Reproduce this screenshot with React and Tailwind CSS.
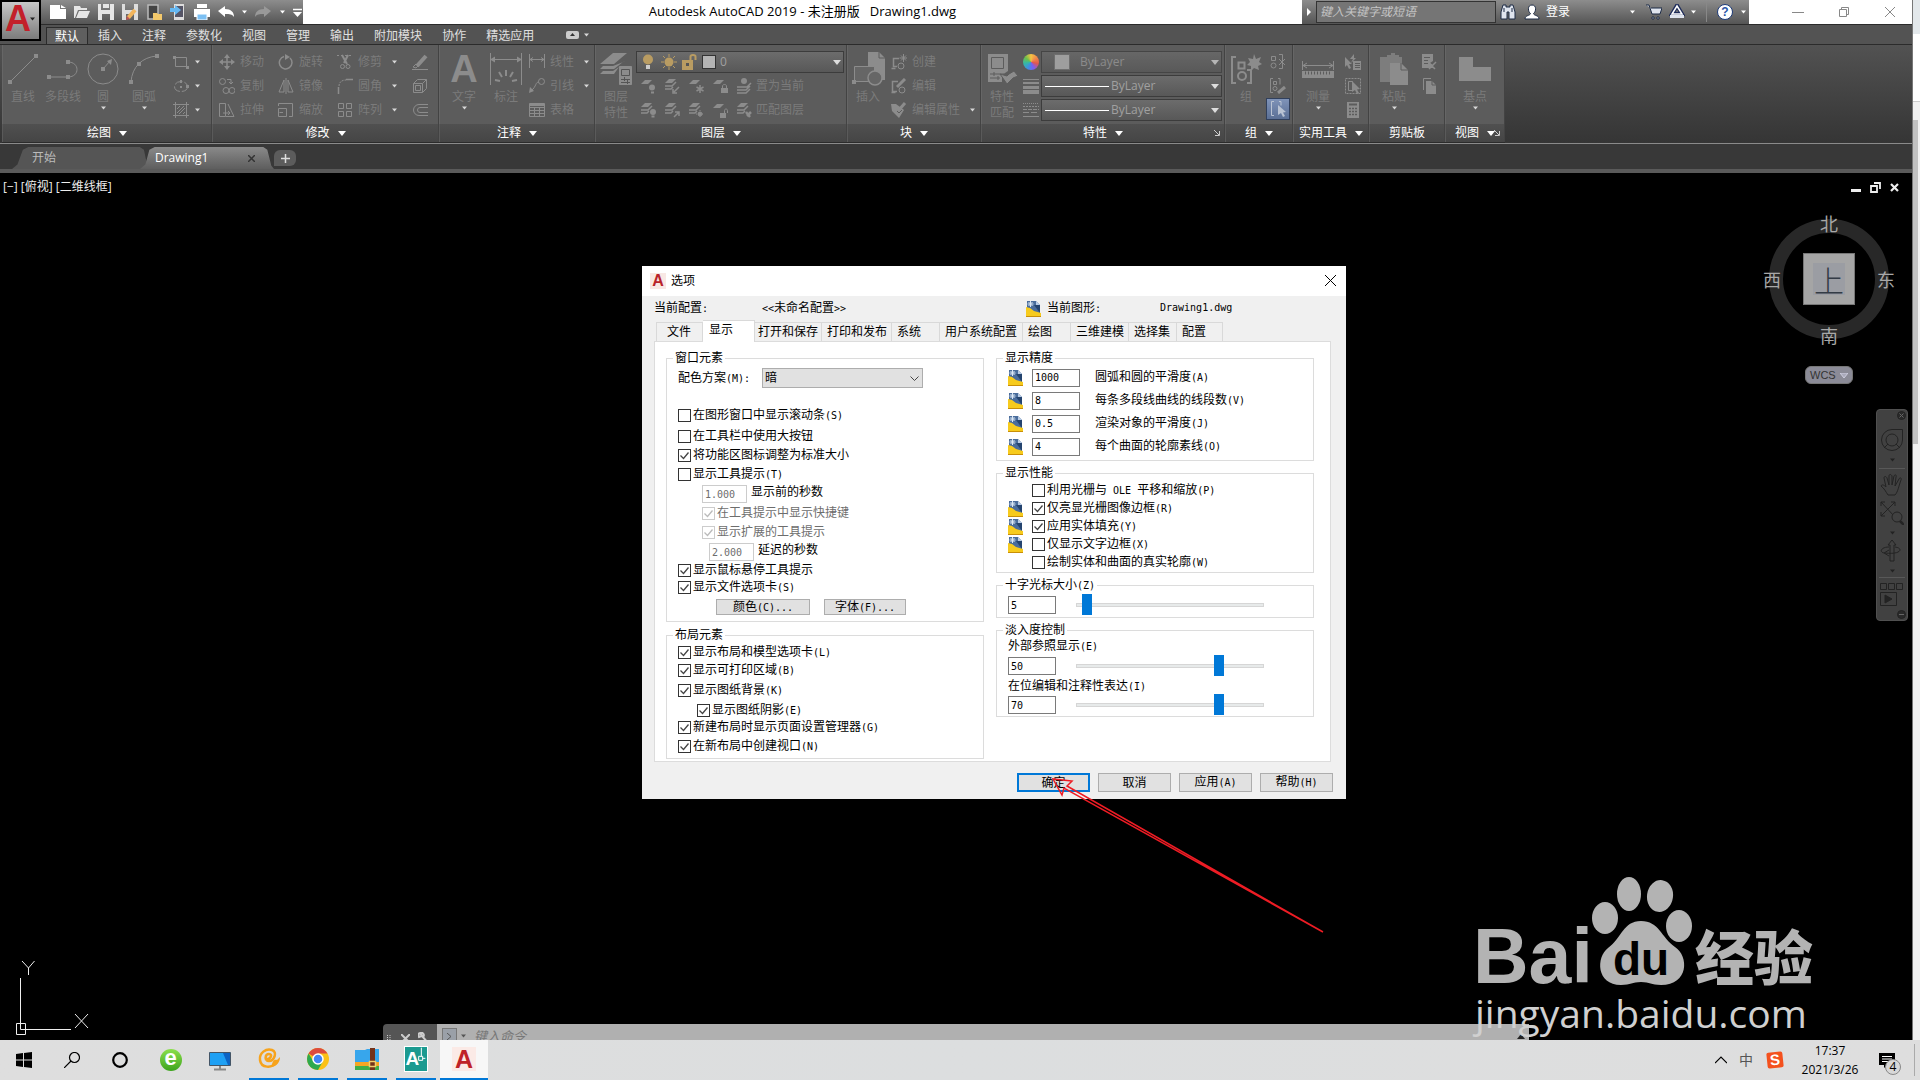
import { useState } from "react";

/* ---------- helpers ---------- */

const Svg = ({ size = 16, box = 16, className = "", children }) => (
  <svg
    width={size}
    height={size}
    viewBox={`0 0 ${box} ${box}`}
    fill="none"
    stroke="currentColor"
    strokeWidth="1"
    className={`shrink-0 ${className}`}
    aria-hidden="true"
  >
    {children}
  </svg>
);

const Caret = ({ className = "text-[#d8d8d8]" }) => (
  <svg width="5" height="4" viewBox="0 0 5 4" className={`shrink-0 ${className}`} aria-hidden="true">
    <path d="M0 .5h5L2.5 3.5z" fill="currentColor" />
  </svg>
);

// Latin runs are half as wide as a Chinese character in the dialog font
const Mixed = ({ children }) =>
  children.split(/([\x20-\x7e]+)/).map((part, i) =>
    /[\x20-\x7e]/.test(part) ? (
      <span key={i} className="whitespace-pre font-['DejaVu_Sans_Mono',monospace] text-[10px]">{part}</span>
    ) : (
      part
    )
  );

/* ---------- ribbon drawings ---------- */

const Sheet = ({ y = 2 }) => <path d={`M5 ${y}h7l-4 4H1z`} fill="currentColor" stroke="none" />;
const Sheets = () => (
  <>
    <Sheet y={1} />
    <path d="M1 8h7l4-4M1 11h6l2-2" strokeWidth="1.5" />
  </>
);

const art = {
  line: (
    <Svg size={32} box={32}>
      <path d="M3 29L29 3" />
      <path d="M1 27h4v4H1zM27 1h4v4h-4z" fill="currentColor" stroke="none" />
    </Svg>
  ),
  polyline: (
    <Svg size={32} box={32}>
      <path d="M2 24h19M21 9c12 0 12 15 0 15" />
      <path d="M0 22h4v4H0zM19 22h4v4h-4zM19 7h4v4h-4z" fill="currentColor" stroke="none" />
    </Svg>
  ),
  circle: (
    <Svg size={32} box={32}>
      <circle cx="16" cy="16" r="15" />
      <path d="M16 16l7-8" />
      <path d="M14 14h4v4h-4zM25 6l-1 6-4-4z" fill="currentColor" stroke="none" />
    </Svg>
  ),
  arc: (
    <Svg size={32} box={32}>
      <path d="M3 29C4 14 14 4 29 3" />
      <path d="M1 27h4v4H1zM9 9h4v4H9zM27 1h4v4h-4z" fill="currentColor" stroke="none" />
    </Svg>
  ),
  rect: (
    <Svg>
      <path d="M2.500 3.500h11v9h-11z" />
      <path d="M0 2h3v3H0zM13 12h3v3h-3z" fill="currentColor" stroke="none" />
    </Svg>
  ),
  ellipse: (
    <Svg>
      <ellipse cx="8" cy="8.500" rx="6.500" ry="5" strokeDasharray="8 2" />
      <path d="M7 8h2v2H7zM7 2h2v3H7zM13 7h3v3h-3z" fill="currentColor" stroke="none" />
    </Svg>
  ),
  hatch: (
    <Svg>
      <path d="M2.500 0v16M13.500 0v16M0 2.500h16M0 13.500h16M4 7l3-3M4 11l7-7M6 12l6-6M10 12l2-2" />
    </Svg>
  ),
  move: (
    <Svg>
      <path d="M8 2v12M2 8h12" strokeWidth="1.500" />
      <path d="M8 0l3 4H5zM8 16l3-4H5zM0 8l4-3v6zM16 8l-4-3v6z" fill="currentColor" stroke="none" />
    </Svg>
  ),
  rotate: (
    <Svg>
      <path d="M6 2.500A6.300 6.300 0 1 0 12 4" strokeWidth="1.500" />
      <path d="M7 0l5 3-5 3z" fill="currentColor" stroke="none" />
    </Svg>
  ),
  trim: (
    <Svg>
      <path d="M0 1.500h16" strokeDasharray="2 2" />
      <path d="M5 1l5 9M11 1L7 9" strokeWidth="2" />
      <circle cx="5.500" cy="12.500" r="2" />
      <circle cx="11" cy="12.500" r="2" />
    </Svg>
  ),
  erase: (
    <Svg>
      <path d="M5 12L14 2" strokeWidth="4" />
      <path d="M0 15.500h16M1 13l3-3 2 2-2 2z" />
    </Svg>
  ),
  copy: (
    <Svg>
      <circle cx="3.500" cy="3.500" r="3" />
      <circle cx="7" cy="12.500" r="3" />
      <circle cx="13" cy="12.500" r="3" />
      <path d="M8 1.500h4v4M10 4l2 2 2-2" />
    </Svg>
  ),
  mirror: (
    <Svg>
      <path d="M6 2v12H1zM10 2v12h5z" />
      <path d="M8 0v16" />
    </Svg>
  ),
  fillet: (
    <Svg>
      <path d="M1.500 16V9" strokeWidth="1.500" />
      <path d="M2 8c0-4 3-6 7-6" strokeDasharray="2 1" />
      <path d="M9 1.500h7" strokeWidth="1.500" />
    </Svg>
  ),
  explode: (
    <Svg>
      <path d="M1.500 5.500h9v9h-9zM3.500 7.500h5v5h-5zM1.500 5.500l4-4h9l-4 4M14.500 1.500v9l-4 4" />
    </Svg>
  ),
  stretch: (
    <Svg>
      <path d="M.5 1.500h6v13h-6zM9 2l6 12.500H7M4 11h7M9 9l2 2-2 2" />
    </Svg>
  ),
  scale: (
    <Svg>
      <path d="M.5 6.500h8v8h-8zM.5 4V1.500h14v13H11M5 10.500H1.500" />
    </Svg>
  ),
  array: (
    <Svg>
      <path d="M1.500 1.500h5v5h-5zM9.500 1.500h5v5h-5zM1.500 9.500h5v5h-5zM9.500 9.500h5v5h-5z" />
    </Svg>
  ),
  offset: (
    <Svg>
      <path d="M16 2.500H7a5.500 5.500 0 0 0 0 11h9M16 5.500H8a2.500 2.500 0 0 0 0 5h8" />
    </Svg>
  ),
  dim: (
    <Svg size={32} box={32}>
      <path d="M.5 0v32M31.500 0v32M1 6.500h30" />
      <path d="M0 6.500l5-3v6zM32 6.500l-5-3v6z" fill="currentColor" stroke="none" />
      <path d="M16 17v6M9 19l3 5M23 19l-3 5M5 27l5 1M27 27l-5 1" strokeWidth="2" />
    </Svg>
  ),
  linear: (
    <Svg>
      <path d="M.5 0v14M15.500 0v14M1 5.500h14M4 3.500l-3 2 3 2M12 3.500l3 2-3 2" />
    </Svg>
  ),
  leader: (
    <Svg>
      <circle cx="12.500" cy="3.500" r="3" />
      <path d="M10 4c-4 0-2 4-8 9" />
      <path d="M0 15l1-6 4 4z" fill="currentColor" stroke="none" />
    </Svg>
  ),
  table: (
    <Svg>
      <path d="M.5 1.500h15v13H.5zM.5 5.500h15M.5 8.500h15M.5 11.500h15M5.500 5v9M10.500 5v9" />
      <path d="M1 2h14v2H1z" fill="currentColor" stroke="none" />
    </Svg>
  ),
  layers: (
    <Svg size={34} box={34}>
      <path d="M14 1h14L15 12H1zM27 9l-3 1-9 7H1l3-3h10zM20 15l-5 7H1l3-3h10z" fill="currentColor" stroke="none" />
      <path d="M20.500 14.500h12v18h-12z" fill="currentColor" />
      <path d="M22.500 17.500h8v6h-8zM22 27.500h9M22 30.500h9M25.500 25v4M28.500 28v4" stroke="#555" />
    </Svg>
  ),
  layOff: (
    <Svg>
      <Sheet />
      <circle cx="12" cy="9.500" r="3" fill="currentColor" stroke="none" />
      <path d="M11 14.500h3" strokeWidth="2" />
    </Svg>
  ),
  layIso: (
    <Svg>
      <Sheets />
      <path d="M15 9l-5 5M9 11v4h4" strokeWidth="1.500" />
    </Svg>
  ),
  layFreeze: (
    <Svg>
      <Sheet />
      <path d="M12 7v8M8.500 9l7 4M15.500 9l-7 4" strokeWidth="1.500" />
    </Svg>
  ),
  layLock: (
    <Svg>
      <Sheet />
      <path d="M9 10h7v5H9z" fill="currentColor" stroke="none" />
      <path d="M10.500 10V8c0-2 4-2 4 0v2" />
    </Svg>
  ),
  layCur: (
    <Svg>
      <path d="M1 9h10l4-4M1 12h9l4-4M1 15h9l4-4" strokeWidth="1.500" />
      <circle cx="8" cy="3" r="3" fill="currentColor" stroke="none" />
    </Svg>
  ),
  layOn: (
    <Svg>
      <Sheets />
      <circle cx="13" cy="10" r="3" fill="currentColor" stroke="none" />
      <path d="M11.500 14.500h3" strokeWidth="2" />
    </Svg>
  ),
  layUniso: (
    <Svg>
      <Sheets />
      <path d="M10 15l5-5M11 10h4v4" strokeWidth="1.500" />
    </Svg>
  ),
  layThaw: (
    <Svg>
      <Sheets />
      <circle cx="12" cy="12" r="2" fill="currentColor" />
      <path d="M12 8v8M8 12h8" strokeDasharray="1 1" />
    </Svg>
  ),
  layUnlock: (
    <Svg>
      <Sheet />
      <path d="M8 11h6v5H8z" fill="currentColor" stroke="none" />
      <path d="M12.500 11V8.500c0-2 3-2 3 0V11" />
    </Svg>
  ),
  layMatch: (
    <Svg>
      <Sheets />
      <path d="M15 10l-4 4M10 10l4 5" strokeWidth="2.500" />
    </Svg>
  ),
  insert: (
    <Svg size={34} box={34}>
      <path d="M17 0h11l6 6v22H17z" fill="currentColor" stroke="none" />
      <path d="M28 0v6h6" stroke="#5c5c5c" />
      <path d="M3.500 14.500h20v15h-20z" fill="#666" />
      <circle cx="24" cy="26" r="7" fill="#666" strokeWidth="1.500" />
      <path d="M1 28h4v4H1z" fill="currentColor" stroke="none" />
    </Svg>
  ),
  blkNew: (
    <Svg>
      <path d="M8 4.500H2.500v8H6M.5 14.500h4" strokeWidth="1.500" />
      <circle cx="10" cy="12" r="3" />
      <path d="M12.500 0v8M8.500 4h8M10 1.500l5 5M15 1.500l-5 5" />
    </Svg>
  ),
  blkEdit: (
    <Svg>
      <path d="M7 3.500H1.500v10H6M.5 14.500h4" strokeWidth="1.500" />
      <circle cx="11" cy="12" r="3" />
      <path d="M6 9l8-8" strokeWidth="3" />
    </Svg>
  ),
  blkAttr: (
    <Svg>
      <path d="M0 2h5l8 6-5 8-7-7z" fill="currentColor" stroke="none" />
      <path d="M7 9l7-8" strokeWidth="3" />
      <path d="M6 9l2 2 3-3" stroke="#5c5c5c" />
    </Svg>
  ),
  match: (
    <Svg size={32} box={32}>
      <path d="M2 1h20v17l-6 4v7H2z" fill="currentColor" stroke="none" />
      <path d="M5.500 4.500h12v11h-12zM4 21h14M4 25h10M8 19v4M12 23v4" stroke="#5c5c5c" />
      <path d="M14 21l7 10 6-6 5-2-4-5-5 3-2 2z" fill="currentColor" stroke="#5c5c5c" />
    </Svg>
  ),
  weights: (
    <Svg>
      <path d="M0 1.500h16" />
      <path d="M0 5h16" strokeWidth="2" />
      <path d="M0 9.500h16" strokeWidth="3" />
      <path d="M0 14h16" strokeWidth="4" />
    </Svg>
  ),
  types: (
    <Svg>
      <path d="M0 1.500h16" strokeDasharray="1 1" />
      <path d="M0 4.500h16" strokeDasharray="2 1" />
      <path d="M0 7.500h16" strokeDasharray="4 1" />
      <path d="M0 10.500h16" strokeDasharray="6 2" />
      <path d="M0 14.500h16" />
    </Svg>
  ),
  group: (
    <Svg size={32} box={32}>
      <path d="M6 4H2v26h4M17 17h4v13h-4" strokeWidth="2" />
      <path d="M8.500 9.500h6v6h-6z" strokeWidth="2" />
      <circle cx="12" cy="23" r="4" strokeWidth="2" />
      <path d="M24 1l2 5 5-2-2 5 3 2-4 2 1 4-5-2-3 3v-5l-4-1 3-3-2-4 5 1z" fill="currentColor" stroke="none" />
    </Svg>
  ),
  ungroup: (
    <Svg>
      <path d="M1.500 2.500h4v4h-4zM9 .5h3.500v14H9M9 5l6 6M15 5l-6 6" />
      <circle cx="3.500" cy="11.500" r="2.500" />
    </Svg>
  ),
  groupEdit: (
    <Svg>
      <path d="M3 .5H.5v14H3M8 .5h2v6M3.500 3.500h3v3h-3z" />
      <circle cx="5" cy="10.500" r="2" />
      <path d="M8 15l7-6" strokeWidth="3" />
    </Svg>
  ),
  groupSel: (
    <Svg className="text-[#b9c3d3]">
      <path d="M4 .5H1.500v14H4M9 .500h2v4" />
      <path d="M8 4l8 7-3 .5 2 3.500-2 1-2-4-3 2z" fill="currentColor" stroke="none" />
    </Svg>
  ),
  measure: (
    <Svg size={32} box={32}>
      <path d="M.5 8v9M31.500 8v9M1 12.500h30M5 10l-4 2.500L5 15M27 10l4 2.500-4 2.500" />
      <path d="M0 18h32v7H0z" fill="currentColor" stroke="none" />
      <path d="M3 20h27" stroke="#5c5c5c" strokeWidth="3" strokeDasharray="1 2" />
    </Svg>
  ),
  quickSel: (
    <Svg>
      <path d="M0 3l7 7-3 0 2 4-2 1-2-4-2 2zM9 0L5 5h3l-2 4 5-5H9z" fill="currentColor" stroke="none" />
      <path d="M8 7h8v9H8z" fill="currentColor" stroke="none" />
      <path d="M10 9.500h5M10 11.500h5M10 13.500h5" stroke="#5c5c5c" />
    </Svg>
  ),
  selAll: (
    <Svg>
      <path d="M.5.500h15v15H.5z" strokeDasharray="2 1" />
      <path d="M3.500 3.500h4v9h-4z" />
      <path d="M7 3l8 8-3 .5 2 3.500-2 1-2-4-3 2z" fill="currentColor" stroke="none" />
    </Svg>
  ),
  calc: (
    <Svg>
      <path d="M2 0h12v16H2z" fill="currentColor" stroke="none" />
      <path d="M4 2.500h8" stroke="#5c5c5c" strokeWidth="2" />
      <path d="M4 6.500h8M4 9.500h8M4 12.500h8" stroke="#5c5c5c" strokeDasharray="2 1" strokeWidth="1.500" />
    </Svg>
  ),
  paste: (
    <Svg size={32} box={32}>
      <path d="M2 4h7V2h4V0h4v2h4v2h3v7H12v18H2z" fill="currentColor" stroke="none" opacity=".7" />
      <path d="M12 10h11l7 7v15H12z" fill="currentColor" stroke="none" />
      <path d="M23 10v7h7" stroke="#5c5c5c" />
    </Svg>
  ),
  cut: (
    <Svg>
      <path d="M1 0h11v7L9 9l3 2v3H1z" fill="currentColor" stroke="none" />
      <path d="M3 3.500h6M3 6.500h4M3 9.500h4" stroke="#5c5c5c" />
      <path d="M7 8l7 7M15 8l-7 7" strokeWidth="1.500" />
    </Svg>
  ),
  copyclip: (
    <Svg>
      <path d="M2.500 12V.5H10" />
      <path d="M5 3h6l4 4v9H5z" fill="currentColor" stroke="none" />
      <path d="M11 3v4h4" stroke="#5c5c5c" />
    </Svg>
  ),
  base: (
    <Svg size={32} box={32}>
      <path d="M0 4h14v10h18v14H0z" fill="currentColor" stroke="none" />
    </Svg>
  ),
};

const Panel = ({ title, width, caret = true, launcher, children }) => (
  <section className={`flex shrink-0 flex-col border-r border-[#434343] bg-[#5c5c5c] text-[#8c8c8c] ${width}`}>
    <div className="flex flex-1 border-l border-[#666]">{children}</div>
    <button className="relative flex h-[18px] w-full items-center justify-center gap-2 border-l border-[#5a5a5a] bg-linear-to-b from-[#505050] to-[#454545] text-[12px] leading-[18px] whitespace-nowrap text-white">
      {title}
      {caret && (
        <svg width="8" height="5" viewBox="0 0 8 5" aria-hidden="true"><path d="M0 0h8L4 5z" fill="#fff" /></svg>
      )}
      {launcher && (
        <Svg size={6} box={6} className="absolute right-1 text-[#ccc]"><path d="M0 0l5 5M5.500 1v4.500H1" /></Svg>
      )}
    </button>
  </section>
);

const Big = ({ icon, label, second, caret, width = "w-[42px]" }) => (
  <button className={`flex shrink-0 flex-col items-center pt-2 text-[12px] leading-4 text-[#7b7b7b] ${width}`}>
    <span className="mb-1 flex h-8 items-center justify-center text-[#8c8c8c]">{icon}</span>
    <span className="whitespace-nowrap">{label}</span>
    {second && <span>{second}</span>}
    {caret && <Caret className="mt-px text-[#d8d8d8]" />}
  </button>
);

const Small = ({ icon, label, caret, width = "" }) => (
  <button className={`flex h-6 items-center text-[12px] text-[#7b7b7b] ${width}`}>
    <span className="flex w-5 justify-center text-[#8c8c8c]">{icon}</span>
    {label && <span className="ml-[3px] whitespace-nowrap">{label}</span>}
    {caret && <Caret className={label ? "ml-[10px] text-[#d8d8d8]" : "ml-1 text-[#d8d8d8]"} />}
  </button>
);

const Combo = ({ label, options, children, dim }) => (
  <div className={`relative flex h-[22px] flex-1 items-center border border-[#3c3c3c] bg-linear-to-b from-[#6c6c6c] to-[#585858] ${dim ? "opacity-70" : ""}`}>
    {children}
    <select aria-label={label} className="ml-[2px] h-full flex-1 appearance-none bg-transparent text-[12px] leading-4 text-[#a0a0a0] outline-none">
      {options.map((o) => <option key={o}>{o}</option>)}
    </select>
    <svg width="8" height="5" viewBox="0 0 8 5" className="mr-[2px] shrink-0" aria-hidden="true"><path d="M0 0h8L4 5z" fill="#ddd" /></svg>
  </div>
);

const Ribbon = () => (
  <div className="flex h-[100px] border-t border-b border-t-[#2b2b2b] border-b-[#8a8a8a] bg-linear-to-b from-[#525252] to-[#353535] pl-[2px]">
    <div className="flex border-b border-[#2b2b2b]">
      <Panel title="绘图" width="w-[210px]">
        <Big icon={art.line} label="直线" width="w-10" />
        <Big icon={art.polyline} label="多段线" width="w-10" />
        <Big icon={art.circle} label="圆" caret width="w-10" />
        <Big icon={art.arc} label="圆弧" caret />
        <div className="ml-[6px] pt-[5px]">
          <Small icon={art.rect} caret />
          <Small icon={art.ellipse} caret />
          <Small icon={art.hatch} caret />
        </div>
      </Panel>
      <Panel title="修改" width="w-[227px]">
        <div className="grid grid-cols-[59px_59px_75px_20px] content-start pt-[5px] pl-1">
          <Small icon={art.move} label="移动" />
          <Small icon={art.rotate} label="旋转" />
          <Small icon={art.trim} label="修剪" caret />
          <Small icon={art.erase} />
          <Small icon={art.copy} label="复制" />
          <Small icon={art.mirror} label="镜像" />
          <Small icon={art.fillet} label="圆角" caret />
          <Small icon={art.explode} />
          <Small icon={art.stretch} label="拉伸" />
          <Small icon={art.scale} label="缩放" />
          <Small icon={art.array} label="阵列" caret />
          <Small icon={art.offset} />
        </div>
      </Panel>
      <Panel title="注释" width="w-[156px]">
        <div className="flex pl-[3px]">
          <Big icon={<span className="font-['Liberation_Sans'] text-[38px] leading-8 font-bold">A</span>} label="文字" caret />
          <Big icon={art.dim} label="标注" />
          <div className="pt-[5px]">
            <Small icon={art.linear} label="线性" caret />
            <Small icon={art.leader} label="引线" caret />
            <Small icon={art.table} label="表格" />
          </div>
        </div>
      </Panel>
      <Panel title="图层" width="w-[252px]">
        <Big icon={art.layers} label="图层" second="特性" width="w-10" />
        <div className="w-[208px] pt-[5px]">
          <div className="flex h-6 items-center">
            <Combo label="图层" options={["0"]}>
              <div className="flex items-center gap-1 pl-1 text-[#b99c62]">
                <Svg><circle cx="7" cy="5.500" r="5" fill="currentColor" stroke="none" /><path d="M5 11h4v4H5z" fill="#ccc" stroke="none" /></Svg>
                <Svg>
                  <circle cx="8" cy="8" r="4.500" fill="currentColor" stroke="none" />
                  <path d="M8 0v3M8 13v3M0 8h3M13 8h3M2 2l2 2M12 12l2 2M14 2l-2 2M4 12l-2 2" />
                </Svg>
                <Svg><path d="M1 6h11v10H1z" fill="currentColor" stroke="none" /><path d="M9.500 7V2.500c0-2 5-2 5 0V6" strokeWidth="2" /><path d="M5 9h3v3H5z" fill="#555" stroke="none" /></Svg>
                <span className="mr-[2px] ml-px h-[14px] w-[14px] border border-[#333] bg-[#b4b4b4]" />
              </div>
            </Combo>
          </div>
          <div className="flex h-6 items-center">
            {["layOff", "layIso", "layFreeze", "layLock", "layCur"].map((k) => (
              <button key={k} aria-label={k} className="flex w-6 justify-center">{art[k]}</button>
            ))}
            <span className="text-[12px] text-[#7b7b7b]">置为当前</span>
          </div>
          <div className="flex h-6 items-center">
            {["layOn", "layUniso", "layThaw", "layUnlock", "layMatch"].map((k) => (
              <button key={k} aria-label={k} className="flex w-6 justify-center">{art[k]}</button>
            ))}
            <span className="text-[12px] text-[#7b7b7b]">匹配图层</span>
          </div>
        </div>
      </Panel>
      <Panel title="块" width="w-[134px]">
        <Big icon={art.insert} label="插入" width="w-10" />
        <div className="pt-[5px] pl-px">
          <Small icon={art.blkNew} label="创建" />
          <Small icon={art.blkEdit} label="编辑" />
          <Small icon={art.blkAttr} label="编辑属性" caret />
        </div>
      </Panel>
      <Panel title="特性" width="w-[244px]" launcher>
        <Big icon={art.match} label="特性" second="匹配" width="w-10" />
        <div className="w-[200px] pt-[5px] pl-px">
          <div className="flex h-6 items-center gap-[2px]">
            <span className="h-4 w-4 rounded-full bg-[conic-gradient(#f6c344,#f08a4b,#e2574c,#7b5cf0,#3f8fe0,#35b8a5,#6fc04a,#f6c344)]" />
            <Combo label="颜色" options={["ByLayer"]} dim>
              <span className="mr-2 ml-3 h-4 w-4 border border-[#777] bg-[#bbb]" />
            </Combo>
          </div>
          <div className="flex h-6 items-center gap-[2px]">
            {art.weights}
            <Combo label="线宽" options={["ByLayer"]}><span className="ml-[3px] h-px w-16 bg-white" /></Combo>
          </div>
          <div className="flex h-6 items-center gap-[2px]">
            {art.types}
            <Combo label="线型" options={["ByLayer"]}><span className="ml-[3px] h-px w-16 bg-white" /></Combo>
          </div>
        </div>
      </Panel>
      <Panel title="组" width="w-[68px]">
        <Big icon={art.group} label="组" width="w-10" />
        <div className="pt-[5px]">
          <button aria-label="解除编组" className="flex h-6 w-6 items-center justify-center">{art.ungroup}</button>
          <button aria-label="组编辑" className="flex h-6 w-6 items-center justify-center">{art.groupEdit}</button>
          <button aria-label="启用组选择" className="flex h-[22px] w-6 items-center justify-center border border-[#31405c] bg-linear-to-b from-[#7f93b8] to-[#5b7096]">{art.groupSel}</button>
        </div>
      </Panel>
      <Panel title="实用工具" width="w-[76px]">
        <Big icon={art.measure} label="测量" caret width="w-12" />
        <div className="pt-[5px] pl-px">
          <Small icon={art.quickSel} />
          <Small icon={art.selAll} />
          <Small icon={art.calc} />
        </div>
      </Panel>
      <Panel title="剪贴板" width="w-[76px]" caret={false}>
        <Big icon={art.paste} label="粘贴" caret width="w-12" />
        <div className="pt-[5px] pl-px">
          <Small icon={art.cut} />
          <Small icon={art.copyclip} />
        </div>
      </Panel>
      <Panel title="视图" width="w-[60px]" launcher>
        <Big icon={art.base} label="基点" caret width="w-[58px]" />
      </Panel>
    </div>
  </div>
);

/* ---------- title bar ---------- */

const QuickAccess = () => (
  <div className="flex h-6 w-[303px] shrink-0 items-center bg-linear-to-b from-[#8d8d8d] to-[#555] pl-[46px] text-white">
    {[
      <path d="M0 1h10v4h6v10H0zM11 1l5 3h-5z" fill="#fff" stroke="none" />,
      <path d="M0 2h6l1 2h6v2H4l-3 8H0zM5 7h11l-3 7H2z" fill="#e6e6e6" stroke="none" />,
      <path d="M0 0h3v6h9V0h4v16H0zM5 0h6v4H5zM4 10h8v6H4z" fill="#e6e6e6" fillRule="evenodd" stroke="none" />,
      <>
        <path d="M0 0h3v6h9V0h4v16H0zM4 10h8v6H4z" fill="#ddd" fillRule="evenodd" stroke="none" />
        <path d="M6 14l7-8" stroke="#f2b55c" strokeWidth="4" />
        <path d="M4 16l1-4 3 3z" fill="#b55" stroke="none" />
      </>,
      <>
        <path d="M2 1h10v14H2z" fill="#444" stroke="#bbb" strokeWidth="1.500" />
        <path d="M7 9h4l1 1h4v6H7z" fill="#f4c96b" stroke="none" />
      </>,
      <>
        <path d="M4 0h10v16H4z" fill="#ddd" stroke="none" />
        <path d="M5 2h8v11H5z" fill="#556" stroke="none" />
        <path d="M0 4h5V1l6 5-6 5V8H0z" fill="#65b8f2" stroke="none" />
      </>,
      <>
        <path d="M3 0h10v4H3zM0 5h16v8h-3v-3H3v3H0z" fill="#fff" stroke="none" />
        <path d="M3 10h10v6H3z" fill="#7cc0f3" stroke="#fff" />
      </>,
      <path d="M0 7l7-5v3c6 0 9 3 9 8-2-3-4-3-9-3v3z" fill="#fff" stroke="none" />,
    ].map((shape, i) => (
      <button key={i} aria-label={`quick ${i + 1}`} className="flex w-6 justify-center"><Svg>{shape}</Svg></button>
    ))}
    <Caret className="ml-1 text-white" />
    <button aria-label="重做" className="ml-1 flex w-6 justify-center">
      <Svg className="text-[#999]"><path d="M16 7L9 2v3C3 5 0 8 0 13c2-3 4-3 9-3v3z" fill="currentColor" stroke="none" /></Svg>
    </button>
    <Caret className="ml-[5px] text-white" />
    <Svg size={9} box={9} className="ml-2"><path d="M0 1.500h9" strokeWidth="1.500" /><path d="M0 4h9L4.500 9z" fill="#fff" stroke="none" /></Svg>
  </div>
);

const InfoCenter = () => (
  <div className="flex h-6 w-[447px] shrink-0 items-center bg-linear-to-b from-[#8d8d8d] to-[#555] text-white">
    <svg width="4" height="8" viewBox="0 0 4 8" className="mx-[5px]" aria-hidden="true"><path d="M0 0l4 4-4 4z" fill="#fff" /></svg>
    <input
      aria-label="搜索"
      placeholder="键入关键字或短语"
      className="h-[22px] w-[180px] border border-[#333] bg-[#757575] px-[3px] pb-[2px] text-[12px] italic outline-none placeholder:text-[#c4c4c4]"
    />
    <Svg className="ml-1 text-[#1d2b45]">
      <path d="M3 1h3v2h4V1h3l2 7v7H9V8H7v7H1V8z" fill="#dfe4ee" />
      <path d="M4 4v4M12 4v4" />
    </Svg>
    <Svg className="ml-2"><path d="M8 1c5 0 4 7 1.500 8.500C10 12 15 11 15 15H1c0-4 5-3 5.500-5.500C4 8 3 1 8 1z" fill="#fff" stroke="#1d2b45" /></Svg>
    <button className="ml-[6px] w-[84px] text-left text-[12px]">登录</button>
    <Caret className="text-white" />
    <Svg className="ml-[11px]"><path d="M0 1h3l3 9h8l2-6H5M6 13h2v2H6zM11 13h2v2h-2z" fill="#dfe4ee" stroke="#1d2b45" /></Svg>
    <Svg className="ml-[7px]"><path d="M8 1.500L13 10H3z" stroke="#1d2b5a" strokeWidth="4" /><path d="M8 2l5 8H3z" stroke="#fff" strokeWidth="1.500" /><path d="M1 12.500h14" stroke="#dfe4ee" strokeWidth="3" /></Svg>
    <Caret className="ml-[6px] text-white" />
    <span className="mx-[10px] h-5 w-px bg-[#888]" />
    <button className="flex h-4 w-4 items-center justify-center rounded-full border border-[#1d3a78] bg-white font-['Liberation_Sans'] text-[12px] leading-3 font-bold text-[#2a56a8]">?</button>
    <Caret className="ml-2 text-white" />
  </div>
);

const TitleBar = () => (
  <header className="flex h-6 bg-white">
    <QuickAccess />
    <h1 className="flex-1 text-center text-[13px] leading-[22px] whitespace-pre text-black">Autodesk AutoCAD 2019 - 未注册版   Drawing1.dwg</h1>
    <InfoCenter />
    <div className="flex w-[163px] items-center justify-between pr-4 pl-[43px] text-[#888]">
      <Svg size={12} box={12}><path d="M0 6.500h12" /></Svg>
      <Svg size={12} box={12}><path d="M1.500 3.500h7v7h-7zM3.500 3V1.500h7v7H9" /></Svg>
      <Svg size={12} box={12}><path d="M1 1l10 10M11 1L1 11" /></Svg>
    </div>
  </header>
);

const ribbonTabs = ["默认", "插入", "注释", "参数化", "视图", "管理", "输出", "附加模块", "协作", "精选应用"];

const RibbonTabs = () => (
  <nav className="flex h-5 border-t border-[#2b2b2b] bg-[#535353] pl-[46px] text-[12px] text-[#e0e0e0]">
    {ribbonTabs.map((t, i) => (
      <button
        key={t}
        className={
          i === 0
            ? "mt-[2px] border-x border-t border-[#2b2b2b] bg-[#5f5f5f] px-2 leading-[18px] text-white"
            : "px-[10px] leading-[22px]"
        }
      >
        {t}
      </button>
    ))}
    <span className="ml-[22px] flex items-center gap-[5px]">
      <span className="flex h-2 w-[13px] items-center justify-center rounded-xs bg-[#ccc]">
        <svg width="5" height="3" viewBox="0 0 5 3" aria-hidden="true"><path d="M0 3h5L2.500 0z" fill="#333" /></svg>
      </span>
      <Caret />
    </span>
  </nav>
);

const FileTabs = () => (
  <div className="flex h-[29px] items-end border-b-4 border-[#5a5a5a] bg-[#383838] pl-3 text-[12px]">
    <div className="flex h-[22px] w-[136px] items-center rounded-t-lg bg-[#555] pl-5 text-[#bbb] [clip-path:polygon(0_100%,4%_80%,8%_12%,12%_0,94%_0,97%_12%,100%_100%)]">开始</div>
    <div className="-ml-2 flex h-[22px] w-[134px] items-center justify-between bg-linear-to-b from-[#8a8a8a] to-[#5e5e5e] pr-[19px] pl-[15px] text-white [clip-path:polygon(0_100%,4%_80%,7%_12%,11%_0,92%_0,95%_12%,98%_85%,100%_100%)]">
      Drawing1
      <button aria-label="关闭" className="text-[#333]"><Svg size={7} box={7}><path d="M0 0l7 7M7 0L0 7" strokeWidth="1.500" /></Svg></button>
    </div>
    <button aria-label="新图形" className="mb-[3px] flex h-4 w-[22px] items-center justify-center rounded-md rounded-bl-none bg-[#5c5c5c] text-[#ddd]">
      <Svg size={9} box={9}><path d="M4.500 0v9M0 4.500h9" strokeWidth="1.500" /></Svg>
    </button>
  </div>
);

/* ---------- options dialog ---------- */

const DwgIcon = ({ className = "" }) => (
  <svg width="16" height="17" viewBox="0 0 16 17" className={`shrink-0 ${className}`} aria-hidden="true">
    <path d="M1 1h9l4 4v10H1z" fill="#4a6d9c" />
    <path d="M8 5h6v8z" fill="#24446f" />
    <path d="M10 1l4 4h-4z" fill="#b9cde6" />
    <path d="M4.500 1v6M1.500 4h6M2.500 2l4 4M6.500 2l-4 4" stroke="#dbe8f5" />
    <path d="M0 7l4 1 4 3 7 2v3H0z" fill="#f7cb1d" />
    <path d="M0 16.500h15" stroke="#c98f07" />
  </svg>
);

const Check = ({ label, on, disabled, height = "h-[18px]", indent = "" }) => {
  const [checked, setChecked] = useState(!!on);
  return (
    <label className={`flex items-center gap-[2px] whitespace-nowrap ${height} ${indent} ${disabled ? "text-[#6d6d6d]" : ""}`}>
      <span className="relative flex h-[13px] w-[13px] shrink-0">
        <input
          type="checkbox"
          checked={checked}
          disabled={disabled}
          onChange={() => setChecked(!checked)}
          className="peer h-[13px] w-[13px] appearance-none border border-[#333] bg-white disabled:border-[#ccc]"
        />
        <svg viewBox="0 0 13 13" className="pointer-events-none absolute inset-0 hidden text-[#444] peer-checked:block peer-disabled:text-[#bbb]" aria-hidden="true">
          <path d="M2.500 6.500l3 3 5-6" fill="none" stroke="currentColor" strokeWidth="1.300" />
        </svg>
      </span>
      <span><Mixed>{label}</Mixed></span>
    </label>
  );
};

const Field = ({ label, value, disabled, width = "w-12" }) => (
  <input
    type="text"
    aria-label={label}
    defaultValue={value}
    disabled={disabled}
    className={`h-[18px] border border-[#7a7a7a] bg-white px-[2px] font-['DejaVu_Sans_Mono',monospace] text-[10px] text-black outline-none disabled:border-[#ccc] disabled:text-[#6d6d6d] ${width}`}
  />
);

const Group = ({ title, className = "", children }) => (
  <fieldset className={`min-w-0 border border-[#dcdcdc] ${className}`}>
    <legend className="ml-[6px] h-4 px-[2px] leading-4"><Mixed>{title}</Mixed></legend>
    <div className="pl-[11px]">{children}</div>
  </fieldset>
);

const PushButton = ({ label, className = "" }) => (
  <button className={`border border-[#adadad] bg-[#e1e1e1] leading-4 ${className}`}><Mixed>{label}</Mixed></button>
);

const Slider = ({ label, value }) => (
  <input
    type="range"
    aria-label={label}
    defaultValue={value}
    className="h-[21px] w-[188px] appearance-none bg-transparent [&::-webkit-slider-runnable-track]:h-1 [&::-webkit-slider-runnable-track]:border [&::-webkit-slider-runnable-track]:border-[#d6d6d6] [&::-webkit-slider-runnable-track]:bg-[#e7eaea] [&::-webkit-slider-thumb]:mt-[-10px] [&::-webkit-slider-thumb]:h-[21px] [&::-webkit-slider-thumb]:w-[10px] [&::-webkit-slider-thumb]:appearance-none [&::-webkit-slider-thumb]:bg-[#0078d7]"
  />
);

const dialogTabs = [
  { label: "文件", width: "w-[47px]", pad: "border-l pl-[10px]" },
  { label: "显示", width: "w-[52px]", active: true },
  { label: "打开和保存", width: "w-[67px]", pad: "pl-[3px]" },
  { label: "打印和发布", width: "w-[70px]", pad: "pl-[5px]" },
  { label: "系统", width: "w-12", pad: "pl-[5px]" },
  { label: "用户系统配置", width: "w-[83px]", pad: "pl-[5px]" },
  { label: "绘图", width: "w-12", pad: "pl-[5px]" },
  { label: "三维建模", width: "w-[58px]", pad: "pl-[5px]" },
  { label: "选择集", width: "w-12", pad: "pl-[5px]" },
  { label: "配置", width: "w-[46px]", pad: "pl-[5px]" },
];

const OptionsDialog = () => (
  <div role="dialog" aria-label="选项" className="absolute top-[93px] left-[642px] w-[704px] bg-[#f0f0f0] pb-[7px] text-[12px] leading-4 text-black">
    <div className="flex h-[30px] items-center bg-white px-2 pb-px">
      <span className="mr-[5px] flex h-4 w-4 items-center justify-center bg-[#f8e8e4] font-['Liberation_Sans'] text-[16px] leading-4 font-bold text-[#b8232a]">A</span>
      <span className="flex-1">选项</span>
      <button aria-label="关闭" className="px-[2px]"><Svg size={11} box={11}><path d="M0 0l11 11M11 0L0 11" /></Svg></button>
    </div>

    <div className="flex h-6 items-center pl-3">
      <span className="w-[108px]"><Mixed>当前配置:</Mixed></span>
      <span className="w-[264px]"><Mixed>{"<<未命名配置>>"}</Mixed></span>
      <DwgIcon className="mr-[5px]" />
      <span className="w-[113px]"><Mixed>当前图形:</Mixed></span>
      <Mixed>Drawing1.dwg</Mixed>
    </div>

    <div className="flex h-[21px] items-end pl-[14px]">
      {dialogTabs.map((t) => (
        <button
          key={t.label}
          className={`shrink-0 border-t border-r border-[#d9d9d9] text-left whitespace-nowrap ${
            t.active ? "z-10 -mb-px h-[22px] bg-white pb-[3px] pl-[6px]" : `h-[19px] ${t.pad}`
          } ${t.width}`}
        >
          {t.label}
        </button>
      ))}
    </div>

    <div className="mr-[15px] ml-3 flex h-[421px] gap-3 border border-[#dcdcdc] bg-white pt-2 pl-[11px]">
      <div className="w-[318px]">
        <Group title="窗口元素" className="h-[272px]">
          <div className="flex h-6 items-center">
            <label htmlFor="scheme" className="w-[84px]"><Mixed>配色方案(M):</Mixed></label>
            <div className="relative flex items-center">
              <select id="scheme" className="h-5 w-[161px] appearance-none border border-[#adadad] bg-[#e1e1e1] pl-[2px] leading-4 outline-none">
                <option>暗</option>
                <option>明</option>
              </select>
              <Svg size={9} box={9} className="pointer-events-none absolute right-1 text-[#444]"><path d="M.5 2.500l4 4 4-4" /></Svg>
            </div>
          </div>
          <div className="pt-[14px]">
            <Check label="在图形窗口中显示滚动条(S)" height="h-[22px]" />
            <Check label="在工具栏中使用大按钮" height="h-5" />
            <Check label="将功能区图标调整为标准大小" on />
            <Check label="显示工具提示(T)" height="h-5" />
            <div className="flex h-5 items-center gap-1 pl-6">
              <Field label="显示前的秒数" value="1.000" disabled width="w-[45px]" />
              <span className="self-start">显示前的秒数</span>
            </div>
            <Check label="在工具提示中显示快捷键" on disabled indent="pl-6" />
            <Check label="显示扩展的工具提示" on disabled height="h-5" indent="pl-6" />
            <div className="flex h-5 items-center gap-1 pl-[31px]">
              <Field label="延迟的秒数" value="2.000" disabled width="w-[45px]" />
              <span className="self-start">延迟的秒数</span>
            </div>
            <Check label="显示鼠标悬停工具提示" on height="h-4" />
            <Check label="显示文件选项卡(S)" on />
            <div className="flex h-[22px] items-center gap-[14px] pl-[38px]">
              <PushButton label="颜色(C)..." className="h-4 w-[94px] leading-[14px]" />
              <PushButton label="字体(F)..." className="h-4 w-[82px] leading-[14px]" />
            </div>
          </div>
        </Group>
        <Group title="布局元素" className="mt-[5px] h-[132px]">
          <Check label="显示布局和模型选项卡(L)" on />
          <Check label="显示可打印区域(B)" on />
          <Check label="显示图纸背景(K)" on height="h-[22px]" />
          <Check label="显示图纸阴影(E)" on indent="pl-[19px]" />
          <Check label="新建布局时显示页面设置管理器(G)" on height="h-4" />
          <Check label="在新布局中创建视口(N)" on height="h-[22px]" />
        </Group>
      </div>

      <div className="w-[318px]">
        <Group title="显示精度" className="h-[111px]">
          {[
            ["1000", "圆弧和圆的平滑度(A)"],
            ["8", "每条多段线曲线的线段数(V)"],
            ["0.5", "渲染对象的平滑度(J)"],
            ["4", "每个曲面的轮廓素线(O)"],
          ].map(([value, label]) => (
            <div key={label} className="flex h-[23px] items-center">
              <DwgIcon className="mr-2" />
              <Field label={label} value={value} />
              <span className="ml-[15px]"><Mixed>{label}</Mixed></span>
            </div>
          ))}
        </Group>
        <Group title="显示性能" className="mt-1 h-[108px]">
          {[
            ["利用光栅与 OLE 平移和缩放(P)", false, false],
            ["仅亮显光栅图像边框(R)", true, true],
            ["应用实体填充(Y)", true, true],
            ["仅显示文字边框(X)", false, true],
            ["绘制实体和曲面的真实轮廓(W)", false, false],
          ].map(([label, on, icon]) => (
            <div key={label} className="flex h-[18px] items-center">
              <span className="w-6">{icon && <DwgIcon />}</span>
              <Check label={label} on={on} />
            </div>
          ))}
        </Group>
        <Group title="十字光标大小(Z)" className="mt-1 h-[41px]">
          <div className="flex h-6 items-center gap-5">
            <Field label="十字光标大小" value="5" />
            <Slider label="十字光标大小" value={3} />
          </div>
        </Group>
        <Group title="淡入度控制" className="mt-1 h-[95px]">
          <p className="h-4"><Mixed>外部参照显示(E)</Mixed></p>
          <div className="flex h-6 items-center gap-5">
            <Field label="外部参照显示" value="50" />
            <Slider label="外部参照显示" value={78} />
          </div>
          <p className="h-4"><Mixed>在位编辑和注释性表达(I)</Mixed></p>
          <div className="flex h-[22px] items-center gap-5">
            <Field label="在位编辑和注释性表达" value="70" />
            <Slider label="在位编辑和注释性表达" value={78} />
          </div>
        </Group>
      </div>
    </div>

    <div className="flex justify-end gap-2 pt-[11px] pr-[13px]">
      <button className="h-[19px] w-[73px] border-2 border-[#0078d7] bg-[#e1e1e1] leading-[15px]">确定</button>
      <PushButton label="取消" className="h-[19px] w-[73px]" />
      <PushButton label="应用(A)" className="h-[19px] w-[73px]" />
      <PushButton label="帮助(H)" className="h-[19px] w-[73px]" />
    </div>
  </div>
);

/* ---------- drawing area ---------- */

const ViewCube = () => (
  <div className="absolute top-[40px] right-[17px] grid h-[132px] w-[132px] place-items-center font-['Noto_Sans_CJK_SC'] text-[18px] leading-5 text-[#a8a8a8]">
    <div className="absolute inset-[6px] rounded-full border-[14px] border-[#282828]" />
    <span className="absolute top-0">北</span>
    <span className="absolute bottom-0">南</span>
    <span className="absolute left-0">西</span>
    <span className="absolute right-0">东</span>
    <div className="flex h-[52px] w-[52px] items-center justify-center border border-[#777] bg-[#a5a5a5]">
      <span className="flex h-8 w-8 items-center justify-center bg-[#9b9da3] font-['Noto_Sans_CJK_SC'] text-[30px] leading-8 font-light text-[#333b45]">上</span>
    </div>
  </div>
);

const NavBar = () => (
  <div className="absolute top-[236px] right-1 flex h-[212px] w-8 flex-col items-center rounded-sm border border-[#505050] bg-[#414141] text-[#232323]">
    <Svg size={9} box={9} className="mt-px mr-px self-end"><circle cx="4.500" cy="4.500" r="4" fill="#2a2a2a" /><path d="M2.500 2.500l4 4M6.500 2.500l-4 4" stroke="#666" /></Svg>
    <Svg size={24} box={24} className="mt-2">
      <path d="M12 1.500h10.500V12A10.500 10.500 0 1 1 12 1.500z" />
      <circle cx="12" cy="12" r="6" />
      <path d="M8 16l-4 4M16 16l4 4" />
    </Svg>
    <Caret className="my-[6px] text-[#222]" />
    <span className="h-px w-[26px] shrink-0 bg-[#585858]" />
    <Svg size={24} box={24} className="mt-1">
      <path d="M8 22c-2-3-4-7-7-9 1-2 3-1 5 1L4 5c0-2 2-2 3 0l2 7V3c0-2 2-2 3 0v9l2-9c1-2 3-1 2 1l-1 9 4-7c1-2 3-1 2 1-2 5-3 12-6 15z" />
    </Svg>
    <Svg size={24} box={24} className="mt-1">
      <path d="M1 1l14 15M15 1L1 15M1 5V1h4M11 1h4v4M1 11v4h4" />
      <circle cx="17" cy="16" r="5" fill="#414141" />
      <path d="M20 20l4 4" strokeWidth="2.500" />
    </Svg>
    <Caret className="mt-[6px] mb-1 text-[#222]" />
    <Svg size={24} box={24}>
      <path d="M12 1l4 5h-2v16h-4V6H8z" />
      <path d="M9 17l-5-3 5-3M5 14c16 2 19-5 10-6M9 8c-8 0-10 5-5 6" />
    </Svg>
    <Caret className="mt-[6px] mb-1 text-[#222]" />
    <span className="h-px w-[26px] shrink-0 bg-[#585858]" />
    <Svg size={24} box={24} className="mt-1">
      <path d="M.5 1.500h6v6h-6zM8.500 1.500h6v6h-6zM16.500 1.500h6v6h-6zM.5 10.500h16v13H.5z" />
      <path d="M5 13l7 4-7 4z" fill="currentColor" />
    </Svg>
    <Svg size={9} box={9} className="mt-auto mr-px mb-px self-end"><circle cx="4.500" cy="4.500" r="4" fill="#2a2a2a" /><path d="M2 4.500h5" stroke="#666" /></Svg>
  </div>
);

const Watermark = () => (
  <svg width="350" height="170" viewBox="0 0 350 170" className="absolute right-[90px] -bottom-px" fill="#b3b3b3" aria-hidden="true">
    <text x="1" y="112" fontFamily="Liberation Sans" fontWeight="700" fontSize="77">Bai</text>
    <ellipse cx="133" cy="47" rx="13" ry="16" />
    <ellipse cx="157" cy="23" rx="12" ry="17" />
    <ellipse cx="188" cy="25" rx="13" ry="16" transform="rotate(8 188 25)" />
    <ellipse cx="207" cy="55" rx="13" ry="16" />
    <path d="M169 50c-18 0-19 17-33 27-12 9-12 37 13 37 10 0 11-3 20-3s10 3 20 3c28 0 28-29 14-38-14-10-16-26-34-26z" />
    <text x="141" y="104" fontFamily="Liberation Sans" fontWeight="700" fontSize="46" fill="#000">du</text>
    <text x="223" y="109" fontFamily="Noto Sans CJK SC" fontWeight="900" fontSize="59">经验</text>
    <text x="3" y="157" fontFamily="Open Sans" fontWeight="500" fontSize="39" fill="#d0d0d0">jingyan.baidu.com</text>
  </svg>
);

const Canvas = () => (
  <main className="relative flex-1 overflow-hidden bg-black text-[#eee]">
    <div className="flex justify-between pt-1 pr-3 pl-[3px]">
      <p className="text-[12px] leading-5">[−] [俯视] [二维线框]</p>
      <div className="flex items-center gap-2">
        <Svg size={11} box={11}><path d="M0 8.500h10" strokeWidth="3" /></Svg>
        <Svg size={11} box={11}><path d="M1 4h6v6H1zM4 1h6v6" strokeWidth="1.800" /></Svg>
        <Svg size={11} box={11}><path d="M2 2l7 7M9 2L2 9" strokeWidth="2.200" /></Svg>
      </div>
    </div>

    <ViewCube />
    <button className="absolute top-[193px] right-[59px] flex h-[18px] w-12 items-center justify-between rounded-md border border-[#777] bg-[#8b8b97] px-1 font-['Liberation_Sans'] text-[11px] text-[#333]">
      WCS
      <svg width="8" height="5" viewBox="0 0 8 5" aria-hidden="true"><path d="M0 0h8L4 5z" fill="#aab" stroke="#ccd" /></svg>
    </button>
    <NavBar />

    {/* UCS icon */}
    <svg width="100" height="90" viewBox="0 0 100 90" className="absolute bottom-0 left-0" fill="none" stroke="#eee" aria-hidden="true">
      <path d="M20.500 28v51.500H71M16.500 73.500h9v11h-9z" />
      <path d="M22 11l6.500 7 6-7M28.500 18v7M75 64l13 14M88 64L75 78" />
    </svg>

    {/* Command line */}
    <div className="absolute bottom-0 left-[383px] flex h-4 w-[1146px] items-start overflow-hidden rounded-tl-sm bg-[#555]">
      <span className="flex h-6 w-[54px] items-center gap-2 pt-1 pl-1 text-[#ccc]">
        <Svg size={6} box={12}><path d="M1 0v12M6 0v12" strokeDasharray="2 2" strokeWidth="2" /></Svg>
        <Svg size={9} box={9}><path d="M0 0l9 9M9 0L0 9" strokeWidth="2" /></Svg>
        <Svg size={12} box={12}><path d="M4 4l7 8M2 1l2 3-3 1c-1-3 0-4 1-4zm0 0c3-1 5 2 3 4" strokeWidth="2" /></Svg>
      </span>
      <label className="flex h-6 flex-1 items-center gap-1 bg-[#b0b0b0] pl-[5px] text-[#555]">
        <span className="flex h-4 w-[15px] items-center justify-center border border-[#777] bg-[#9aa0a8]">
          <Svg size={7} box={7}><path d="M1 0l4 3.500L1 7" /></Svg>
        </span>
        <Caret className="text-[#555]" />
        <input aria-label="命令" placeholder="键入命令" className="flex-1 bg-transparent pt-[2px] pl-1 text-[13px] italic outline-none placeholder:text-[#777]" />
        <svg width="8" height="5" viewBox="0 0 8 5" className="mr-1" aria-hidden="true"><path d="M0 5h8L4 0z" fill="#222" /></svg>
      </label>
    </div>

    <Watermark />
    <OptionsDialog />

    {/* Red pointer to the OK button */}
    <svg width="280" height="160" viewBox="0 0 280 160" className="pointer-events-none absolute top-[604px] left-[1050px]" fill="none" stroke="#ed1c24" strokeWidth="1.500" aria-hidden="true">
      <path d="M273 155L17 9l5-5-19-2 9 16 2-7z" />
    </svg>
  </main>
);

/* ---------- taskbar ---------- */

const TaskIcon = ({ running, active, label, wide = "w-[49px]", children }) => (
  <button
    aria-label={label}
    className={`flex h-10 flex-col items-center ${wide} ${active ? "bg-[#f7f7f7]" : ""}`}
  >
    <span className="flex flex-1 items-center justify-center">{children}</span>
    {running && <span className={`h-[2px] bg-[#0078d7] ${active ? "w-full" : "w-10"}`} />}
  </button>
);

const Taskbar = () => (
  <footer className="flex h-10 items-center bg-linear-to-r from-[#dedede] via-[#dcdedf] to-[#dedede] text-black">
    <TaskIcon label="开始" wide="w-12">
      <Svg><path d="M0 2l7-1v6.500H0zM8 1l8-1v7.500H8zM0 8.500h7V15l-7-1zM8 8.500h8V16l-8-1z" fill="#000" stroke="none" /></Svg>
    </TaskIcon>
    <TaskIcon label="搜索" wide="w-12">
      <Svg><circle cx="10.500" cy="5.500" r="5" strokeWidth="1.200" /><path d="M7 9l-7 7" strokeWidth="1.200" /></Svg>
    </TaskIcon>
    <TaskIcon label="Cortana" wide="w-12">
      <Svg><circle cx="8" cy="8" r="6.800" strokeWidth="2.200" /></Svg>
    </TaskIcon>
    <div className="ml-[2px] flex">
      <TaskIcon label="浏览器">
        <span className="relative flex h-[22px] w-[22px] items-center justify-center rounded-full bg-linear-to-b from-[#8be04c] to-[#3ba31c] font-['Liberation_Sans'] text-[22px] leading-4 font-bold text-white">
          <span className="-mt-1">e</span>
        </span>
      </TaskIcon>
      <TaskIcon label="电脑">
        <Svg size={24} box={24}><path d="M1.500 4.500h21v13h-21z" fill="#1ea0f4" stroke="#456" /><path d="M15 5l5 12h2V5z" fill="#0c63c4" stroke="none" /><path d="M12 18v3M6 21.500h12" stroke="#888" strokeWidth="2" /></Svg>
      </TaskIcon>
      <TaskIcon label="下载" running>
        <Svg size={24} box={24}>
          <path d="M8 12c6 1 8-5 4-5-4 0-5 7 0 7s9-9 3-11C9 1 2 6 3 13c1 8 12 9 16 2" stroke="#f7a31c" strokeWidth="2.500" />
          <path d="M15 17c1-4 3-5 5-4l3-3c0 5-3 9-8 10z" fill="#f7a31c" stroke="none" />
        </Svg>
      </TaskIcon>
      <TaskIcon label="Chrome" running>
        <Svg size={24} box={24}>
          <circle cx="12" cy="12" r="11" fill="#fbc116" stroke="none" />
          <path d="M12 12L2.500 6.500A11 11 0 0 1 21.500 6.500H12z" fill="#dd4b3e" stroke="none" />
          <path d="M2.500 6.500A11 11 0 0 0 12 23l4.500-8-9-.5z" fill="#2da94f" stroke="none" />
          <circle cx="12" cy="12" r="5" fill="#4285f4" stroke="#fff" strokeWidth="1.500" />
        </Svg>
      </TaskIcon>
      <TaskIcon label="压缩" running>
        <Svg size={24} box={24}><path d="M0 3h10l2-1h12v13H0z" fill="#37a6ec" stroke="none" /><path d="M0 15h24v4H0z" fill="#f5a623" stroke="none" /><path d="M0 19h24v4H0z" fill="#3fae49" stroke="none" /><path d="M15 1h5v22h-5z" fill="#74331a" stroke="none" /><path d="M14.500 14.500h6v5h-6z" stroke="#f2d06b" strokeWidth="1.500" /></Svg>
      </TaskIcon>
      <TaskIcon label="设计软件" running>
        <span className="relative flex h-[26px] w-6 items-center border border-white bg-[#1b9a90] pl-px font-['Liberation_Sans'] text-[19px] leading-5 font-bold text-white">
          A
          <Svg size={8} box={24} className="absolute right-px bottom-0 h-6"><path d="M10 -22V4M2 4h12v12H2zM14 10h8" strokeWidth="3" /></Svg>
        </span>
      </TaskIcon>
      <TaskIcon label="AutoCAD" running active wide="w-12">
        <span className="flex h-6 w-6 items-center justify-center bg-[#fbeae6] font-['Liberation_Sans'] text-[25px] leading-6 font-bold text-[#bf2228]">A</span>
      </TaskIcon>
    </div>

    <div className="ml-auto flex h-10 items-center">
      <Svg size={12} box={12}><path d="M0 9l6-6 6 6" strokeWidth="1.200" /></Svg>
      <span className="ml-3 w-4 text-[14px] leading-5 text-[#555]">中</span>
      <span className="ml-3 flex h-4 w-4 -rotate-6 items-center justify-center rounded-xs bg-[#f4511e] font-['Liberation_Sans'] text-[15px] leading-4 font-bold text-white">S</span>
      <time className="ml-4 w-[62px] text-center text-[12px] leading-[19px]">
        17:37
        <br />
        2021/3/26
      </time>
      <span className="relative ml-[18px] w-9 border-r border-[#aaa] py-2">
        <Svg size={16} box={16} className="text-white"><path d="M0 1h16v12H8l-3 3v-3H0z" fill="#000" stroke="none" /><path d="M3 4.500h10M3 7h10M3 9.500h7" /></Svg>
        <span className="absolute top-[15px] left-[6px] flex h-4 w-4 items-center justify-center rounded-full border border-[#888] bg-[#d8d8d8] text-[12px] leading-4">4</span>
      </span>
      <span className="w-[5px]" />
    </div>
  </footer>
);

export default function App() {
  return (
    <div className="flex h-screen flex-col overflow-hidden font-['Open_Sans','Noto_Sans_CJK_SC',sans-serif]">
      <div className="flex min-h-0 flex-1">
        <div className="relative flex min-w-0 flex-1 flex-col">
          <TitleBar />
          <RibbonTabs />
          <Ribbon />
          <FileTabs />
          <Canvas />
          <button aria-label="应用程序菜单" className="absolute top-0 left-0 flex h-[41px] w-[41px] items-center border-2 border-black bg-linear-to-b from-[#c8c8c8] to-[#7c7c7c] pb-1 pl-[3px]">
            <span className="font-['Liberation_Sans'] text-[36px] leading-8 font-bold text-[#c3202a]">A</span>
            <Caret className="-ml-px text-[#222]" />
          </button>
        </div>
        <div className="flex w-2 flex-col border-l border-[#777] bg-[#f1f1f1]">
          <div className="h-[34px] bg-[#e3e8eb]" />
          <div className="h-[68px] border-b border-[#ccc] bg-white" />
          <div className="h-[18px]" />
          <div className="h-[324px] w-[5px] bg-[#c1c1c1]" />
        </div>
      </div>
      <Taskbar />
    </div>
  );
}
